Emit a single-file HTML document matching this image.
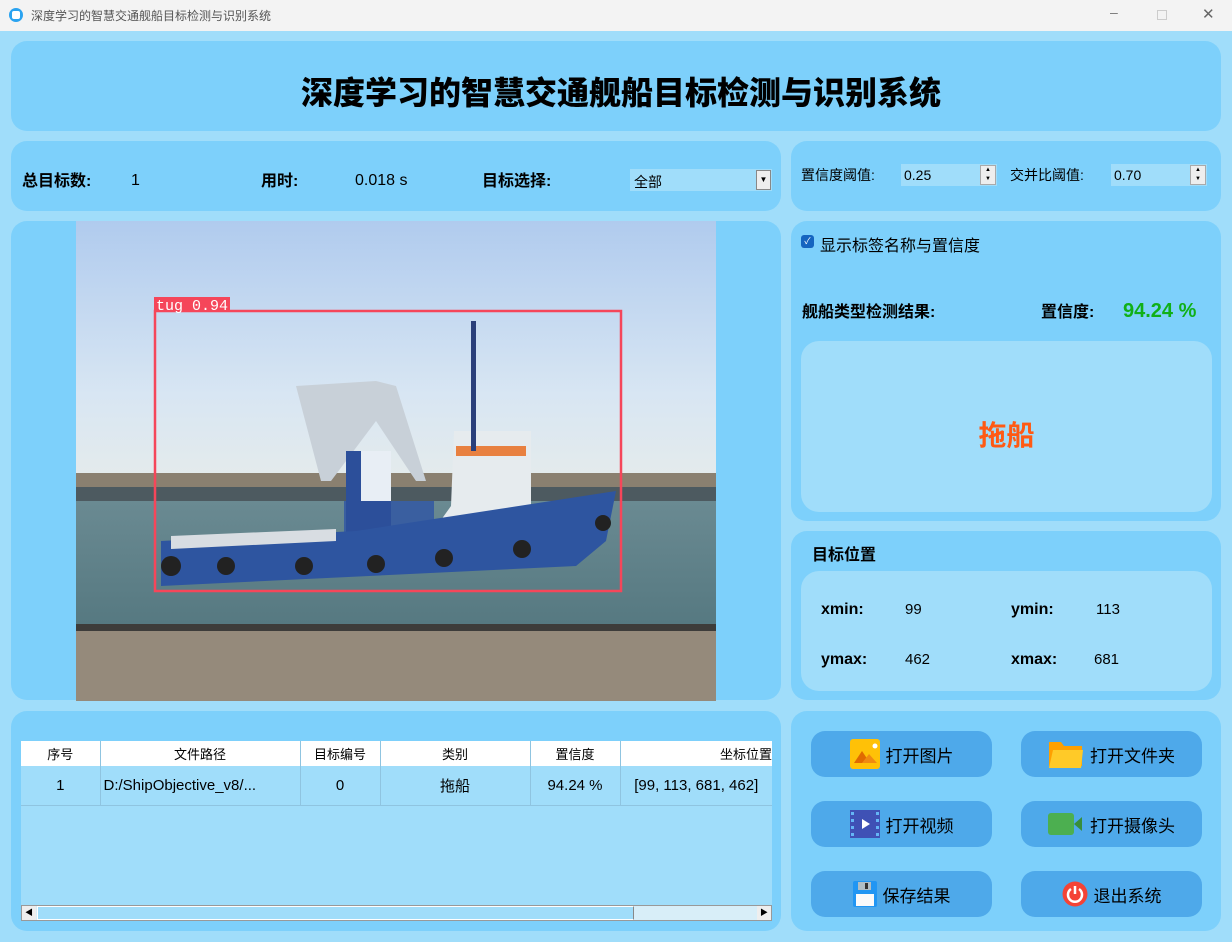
<!DOCTYPE html>
<html><head><meta charset="utf-8"><style>
*{box-sizing:border-box;margin:0;padding:0}
body{width:1232px;height:942px;background:#a0ddfa;font-family:"Liberation Sans","Noto Sans CJK SC",sans-serif;position:relative;overflow:hidden;color:#000}
.abs{position:absolute}
.panel{position:absolute;background:#7dd0fb;border-radius:16px}
.inner{position:absolute;background:#a0ddfa;border-radius:18px}
.tb{left:0;top:0;width:1232px;height:31px;background:#f3f3f3}
.b{font-weight:bold}
.btn{position:absolute;width:181px;height:46px;background:#4ea9ea;border-radius:14px;font-size:17px;display:flex;align-items:center;justify-content:center;gap:6px}
table{border-collapse:collapse;font-size:15px}
td{border-right:1px solid #8fc4e0;text-align:center}
</style></head><body>
<div class="abs tb"></div>
<div class="abs" style="left:9px;top:8px;width:14px;height:14px;border-radius:50%;background:#2aa3f0"></div>
<div class="abs" style="left:12px;top:11px;width:8px;height:8px;border-radius:2px;background:#fff"></div>
<div class="abs" style="left:31px;top:7px;font-size:12px;color:#555">深度学习的智慧交通舰船目标检测与识别系统</div>
<div class="abs" style="left:1110px;top:4px;font-size:14px;color:#777">–</div>
<div class="abs" style="left:1157px;top:10px;width:10px;height:10px;border:1px solid #ccc"></div>
<div class="abs" style="left:1202px;top:5px;font-size:15px;color:#666">✕</div>

<div class="panel" style="left:11px;top:41px;width:1210px;height:90px"></div>
<div class="abs b" style="left:0;width:1242px;top:68px;text-align:center;font-size:32px;font-weight:900">深度学习的智慧交通舰船目标检测与识别系统</div>

<div class="panel" style="left:11px;top:141px;width:770px;height:70px"></div>
<div class="abs b" style="left:22px;top:167px;font-size:16px">总目标数:</div>
<div class="abs" style="left:131px;top:172px;font-size:16px">1</div>
<div class="abs b" style="left:261px;top:167px;font-size:16px">用时:</div>
<div class="abs" style="left:355px;top:172px;font-size:16px">0.018 s</div>
<div class="abs b" style="left:482px;top:167px;font-size:16px">目标选择:</div>
<div class="abs" style="left:630px;top:169px;width:142px;height:22px;background:#a0ddfa;font-size:14px;padding:3px 4px">全部</div>
<div class="abs" style="left:756px;top:170px;width:15px;height:20px;background:#eee;border:1px solid #888;font-size:8px;text-align:center;line-height:18px">▼</div>

<div class="panel" style="left:791px;top:141px;width:430px;height:70px"></div>
<div class="abs" style="left:801px;top:165px;font-size:14px">置信度阈值:</div>
<div class="abs" style="left:901px;top:164px;width:96px;height:22px;background:#a0ddfa;font-size:14px;padding:3px 3px">0.25</div>
<div class="abs" style="left:980px;top:165px;width:16px;height:20px;background:#eee;border:1px solid #aaa;font-size:6px;text-align:center;line-height:9px">▲<br>▼</div>
<div class="abs" style="left:1010px;top:165px;font-size:14px">交并比阈值:</div>
<div class="abs" style="left:1111px;top:164px;width:96px;height:22px;background:#a0ddfa;font-size:14px;padding:3px 3px">0.70</div>
<div class="abs" style="left:1190px;top:165px;width:16px;height:20px;background:#eee;border:1px solid #aaa;font-size:6px;text-align:center;line-height:9px">▲<br>▼</div>

<div class="panel" style="left:11px;top:221px;width:770px;height:479px"></div>
<svg class="abs" style="left:76px;top:221px" width="640" height="480" viewBox="0 0 640 480">
<defs><linearGradient id="sky" x1="0" y1="0" x2="0" y2="1"><stop offset="0" stop-color="#b0cbee"/><stop offset="0.6" stop-color="#d8e6f3"/><stop offset="1" stop-color="#e9ede9"/></linearGradient>
<linearGradient id="wat" x1="0" y1="0" x2="0" y2="1"><stop offset="0" stop-color="#6a8a92"/><stop offset="1" stop-color="#557880"/></linearGradient></defs>
<rect width="640" height="290" fill="url(#sky)"/>
<rect y="252" width="640" height="28" fill="#8a8070"/>
<rect y="266" width="640" height="14" fill="#4d5a60"/>
<rect y="280" width="640" height="130" fill="url(#wat)"/>
<rect y="405" width="640" height="75" fill="#958a7b"/>
<rect y="403" width="640" height="7" fill="#3d3c3a"/>
<path d="M220 165 L300 160 L320 165 L350 260 L340 260 L300 200 L255 260 L245 260 Z" fill="#c8d0d8"/>
<rect x="268" y="280" width="90" height="40" fill="#3a5fa0"/>
<rect x="270" y="230" width="45" height="90" fill="#2c4f9a"/>
<rect x="285" y="230" width="30" height="50" fill="#e8eef5"/>
<path d="M378 210 L455 210 L455 305 L350 320 L375 285 Z" fill="#e6ebee"/>
<rect x="380" y="225" width="70" height="10" fill="#e88040"/>
<rect x="395" y="100" width="5" height="130" fill="#2a3f7a"/>
<path d="M85 320 L280 310 L540 270 L530 320 L500 345 L85 365 Z" fill="#2e55a0"/>
<path d="M95 315 L260 308 L260 320 L95 328 Z" fill="#d8dde2"/>
<g fill="#222"><circle cx="95" cy="345" r="10"/><circle cx="150" cy="345" r="9"/><circle cx="228" cy="345" r="9"/><circle cx="300" cy="343" r="9"/><circle cx="368" cy="337" r="9"/><circle cx="446" cy="328" r="9"/><circle cx="527" cy="302" r="8"/></g>
<rect x="79" y="90" width="466" height="280" fill="none" stroke="#f5465a" stroke-width="2.5"/>
<rect x="78" y="76" width="76" height="15" fill="#f5465a"/>
<text x="80" y="89" fill="#fff" font-size="15" font-family="Liberation Mono,monospace">tug 0.94</text>
</svg>

<div class="panel" style="left:791px;top:221px;width:430px;height:300px"></div>
<div class="abs" style="left:801px;top:235px;width:13px;height:13px;border-radius:3px;background:#1565c0;color:#fff;font-size:9px;text-align:center;line-height:13px">✓</div>
<div class="abs" style="left:820px;top:232px;font-size:16px">显示标签名称与置信度</div>
<div class="abs b" style="left:802px;top:298px;font-size:16px">舰船类型检测结果:</div>
<div class="abs b" style="left:1041px;top:298px;font-size:16px">置信度:</div>
<div class="abs b" style="left:1123px;top:300px;font-size:20px;color:#10b018">94.24 %</div>
<div class="inner" style="left:801px;top:341px;width:411px;height:171px"></div>
<div class="abs b" style="left:801px;width:411px;top:414px;text-align:center;font-size:28px;color:#ff5a14">拖船</div>

<div class="panel" style="left:791px;top:531px;width:430px;height:169px"></div>
<div class="abs b" style="left:812px;top:541px;font-size:16px">目标位置</div>
<div class="inner" style="left:801px;top:571px;width:411px;height:120px"></div>
<div class="abs b" style="left:821px;top:601px;font-size:16px">xmin:</div>
<div class="abs" style="left:905px;top:601px;font-size:15px">99</div>
<div class="abs b" style="left:1011px;top:601px;font-size:16px">ymin:</div>
<div class="abs" style="left:1096px;top:601px;font-size:15px">113</div>
<div class="abs b" style="left:821px;top:651px;font-size:16px">ymax:</div>
<div class="abs" style="left:905px;top:651px;font-size:15px">462</div>
<div class="abs b" style="left:1011px;top:651px;font-size:16px">xmax:</div>
<div class="abs" style="left:1094px;top:651px;font-size:15px">681</div>

<div class="panel" style="left:11px;top:711px;width:770px;height:220px"></div>
<div class="abs" style="left:21px;top:741px;width:751px;height:180px;background:#a0ddfa"></div>
<table class="abs" style="left:21px;top:741px;width:751px">
<tr style="background:#fff;height:25px;font-size:13px"><td style="width:79px">序号</td><td style="width:200px">文件路径</td><td style="width:80px">目标编号</td><td style="width:150px">类别</td><td style="width:90px">置信度</td><td style="text-align:right;border:none">坐标位置</td></tr>
<tr style="height:39px;border-bottom:1px solid #8fc4e0"><td>1</td><td style="text-align:left;padding-left:3px">D:/ShipObjective_v8/...</td><td>0</td><td>拖船</td><td>94.24 %</td><td style="border:none">[99, 113, 681, 462]</td></tr>
</table>
<div class="abs" style="left:21px;top:905px;width:751px;height:16px;background:#d8eef8;border:1px solid #999"></div>
<div class="abs" style="left:37px;top:906px;width:597px;height:14px;background:#a0ddfa;border:1px solid #fff;border-right-color:#888"></div>
<div class="abs" style="left:22px;top:906px;width:14px;height:14px;background:#eee;font-size:8px;text-align:center;line-height:14px">◀</div>
<div class="abs" style="left:757px;top:906px;width:14px;height:14px;background:#eee;font-size:8px;text-align:center;line-height:14px">▶</div>

<div class="panel" style="left:791px;top:711px;width:430px;height:220px"></div>
<div class="btn" style="left:811px;top:731px"><svg width="30" height="30"><rect width="30" height="30" rx="3" fill="#ffc107"/><path d="M4 24 L12 12 L20 24Z" fill="#e06a00"/><path d="M12 24 L19 15 L27 24Z" fill="#f08a10"/><circle cx="25" cy="7" r="2.5" fill="#fff"/></svg>打开图片</div>
<div class="btn" style="left:1021px;top:731px"><svg width="36" height="28"><path d="M1 2 h12 l3 4 h18 v20 h-33z" fill="#ffa000"/><path d="M5 10 h30 l-2 18 h-32z" fill="#ffca28"/></svg>打开文件夹</div>
<div class="btn" style="left:811px;top:801px"><svg width="30" height="28"><rect width="30" height="28" fill="#3f51b5"/><g fill="#64b5f6"><rect x="1" y="2" width="3" height="3"/><rect x="1" y="9" width="3" height="3"/><rect x="1" y="16" width="3" height="3"/><rect x="1" y="23" width="3" height="3"/><rect x="26" y="2" width="3" height="3"/><rect x="26" y="9" width="3" height="3"/><rect x="26" y="16" width="3" height="3"/><rect x="26" y="23" width="3" height="3"/></g><path d="M12 9 L20 14 L12 19Z" fill="#fff"/></svg>打开视频</div>
<div class="btn" style="left:1021px;top:801px"><svg width="36" height="22"><rect width="26" height="22" rx="3" fill="#4caf50"/><path d="M26 11 L34 4 V18Z" fill="#388e3c"/></svg>打开摄像头</div>
<div class="btn" style="left:811px;top:871px"><svg width="24" height="26"><rect width="24" height="26" rx="2" fill="#2196f3"/><rect x="5" y="1" width="13" height="8" fill="#b0bec5"/><rect x="12" y="2" width="3" height="6" fill="#333"/><rect x="3" y="13" width="18" height="12" fill="#fafafa"/></svg>保存结果</div>
<div class="btn" style="left:1021px;top:871px"><svg width="26" height="26"><circle cx="13" cy="13" r="12.5" fill="#f44336"/><path d="M9 8 A7 7 0 1 0 17 8" fill="none" stroke="#fff" stroke-width="2.5"/><path d="M13 5 V13" stroke="#fff" stroke-width="2.5"/></svg>退出系统</div>
</body></html>
